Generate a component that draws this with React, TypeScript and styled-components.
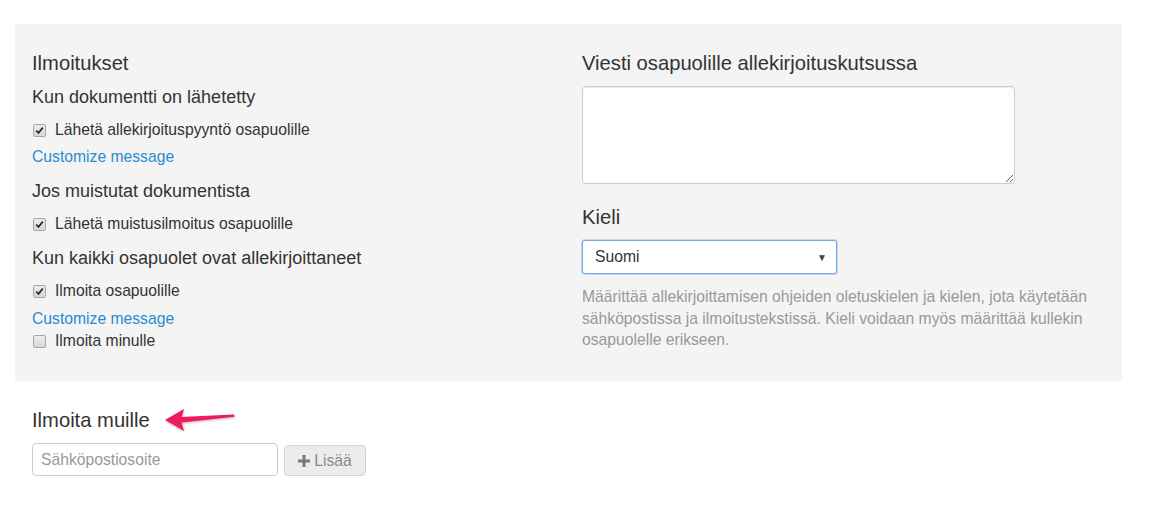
import React from "react";
import styled, { createGlobalStyle } from "styled-components";

const Global = createGlobalStyle`
  html, body { margin: 0; padding: 0; background: #fff; }
  body { font-family: "Liberation Sans", Arial, sans-serif; color: #333; }
  * { box-sizing: border-box; }
`;

const Page = styled.div`
  padding: 24px 0 0 15px;
  width: 1156px;
  height: 506px;
`;

const Panel = styled.section`
  width: 1107px;
  background: #f4f4f4;
  padding: 28px 0 30px 17px;
  display: grid;
  grid-template-columns: 550px 1fr;
`;

const Column = styled.div`
  display: flex;
  flex-direction: column;
  align-items: flex-start;
`;

const Title = styled.h3`
  margin: 0;
  font-size: 20.2px;
  line-height: 22px;
  font-weight: 400;
  color: #333;
`;

const SubTitle = styled.h4<{ $gap?: number }>`
  margin: ${(p) => p.$gap ?? 12}px 0 0;
  font-size: 18px;
  line-height: 22px;
  font-weight: 400;
  color: #333;
`;

const CheckRow = styled.label<{ $gap?: number }>`
  display: flex;
  align-items: center;
  gap: 9px;
  margin-top: ${(p) => p.$gap ?? 12}px;
  padding-left: 1px;
  font-size: 15.7px;
  line-height: 20px;
  color: #333;
`;

const Box = styled.span`
  width: 13px;
  height: 13px;
  border: 1px solid #a6a6a6;
  border-radius: 2px;
  background: linear-gradient(#ececec, #d8d8d8);
  display: flex;
  align-items: center;
  justify-content: center;
`;

const Link = styled.a<{ $gap?: number }>`
  margin-top: ${(p) => p.$gap ?? 7}px;
  font-size: 15.7px;
  line-height: 20px;
  color: #2a8bd0;
  text-decoration: none;
`;

const TextArea = styled.textarea`
  margin-top: 12px;
  width: 433px;
  height: 98px;
  border: 1px solid #ccc;
  border-radius: 4px;
  background: #fff;
  box-shadow: inset 0 1px 1px rgba(0, 0, 0, 0.075);
  font-family: "Liberation Sans", Arial, sans-serif;
  font-size: 15px;
`;

const Spaced = styled(Title)`
  margin-top: 22px;
`;

const Select = styled.div`
  margin-top: 12px;
  width: 255px;
  height: 34px;
  background: #fff;
  border: 1px solid #75a9e6;
  border-radius: 3px;
  box-shadow: 0 0 0 1px rgba(130, 175, 232, 0.45);
  display: flex;
  align-items: center;
  justify-content: space-between;
  padding: 0 9px 0 12px;
  font-size: 15.7px;
  color: #333;
`;

const Caret = styled.span`
  font-size: 10px;
  color: #444;
`;

const Help = styled.p`
  margin: 12px 0 0;
  width: 530px;
  font-size: 15.7px;
  line-height: 21.5px;
  color: #999;
`;

const Below = styled.section`
  padding: 28px 0 0 17px;
`;

const HeadRow = styled.div`
  display: flex;
  align-items: center;
  gap: 14px;
  height: 22px;
`;

const InputRow = styled.div`
  display: flex;
  align-items: flex-start;
  gap: 6px;
  margin-top: 12px;
`;

const Email = styled.input`
  width: 246px;
  height: 33px;
  border: 1px solid #ccc;
  border-radius: 4px;
  padding: 0 8px;
  font-family: "Liberation Sans", Arial, sans-serif;
  font-size: 15.7px;
  color: #333;
  background: #fff;
  &::placeholder { color: #999; }
`;

const AddButton = styled.button`
  margin-top: 2px;
  width: 82px;
  height: 31px;
  border: 1px solid #d4d4d4;
  border-radius: 4px;
  background: #ececec;
  color: #8a8a8a;
  font-family: "Liberation Sans", Arial, sans-serif;
  font-size: 15.7px;
  display: flex;
  align-items: center;
  justify-content: center;
  gap: 4px;
  padding: 0;
`;

const Check = () => (
  <svg width="9" height="9" viewBox="0 0 9 9">
    <path d="M1.2 4.6 L3.5 6.9 L7.8 1.6" fill="none" stroke="#2b2b2b" strokeWidth="1.7" />
  </svg>
);

const CheckItem = ({ checked, label, gap }: { checked: boolean; label: string; gap?: number }) => (
  <CheckRow $gap={gap}>
    <Box>{checked && <Check />}</Box>
    {label}
  </CheckRow>
);

const Arrow = () => (
  <svg width="72" height="28" viewBox="0 0 72 28">
    <defs>
      <filter id="sh" x="-10%" y="-30%" width="120%" height="160%">
        <feDropShadow dx="0.5" dy="1" stdDeviation="0.8" floodColor="#000" floodOpacity="0.3" />
      </filter>
    </defs>
    <path
      d="M1 14 L20 3 L17.5 11 L70 8.5 L70.5 10.8 L17.5 16.5 L20 25 Z"
      fill="#ee1a5c"
      filter="url(#sh)"
    />
  </svg>
);

const Plus = () => (
  <svg width="12" height="12" viewBox="0 0 12 12">
    <path d="M4.5 0 H7.5 V4.5 H12 V7.5 H7.5 V12 H4.5 V7.5 H0 V4.5 H4.5 Z" fill="#777" />
  </svg>
);

export default function App() {
  return (
    <Page>
      <Global />
      <Panel>
        <Column>
          <Title>Ilmoitukset</Title>
          <SubTitle>Kun dokumentti on lähetetty</SubTitle>
          <CheckItem checked label="Lähetä allekirjoituspyyntö osapuolille" />
          <Link href="#">Customize message</Link>
          <SubTitle $gap={13}>Jos muistutat dokumentista</SubTitle>
          <CheckItem checked label="Lähetä muistusilmoitus osapuolille" />
          <SubTitle $gap={13}>Kun kaikki osapuolet ovat allekirjoittaneet</SubTitle>
          <CheckItem checked label="Ilmoita osapuolille" />
          <Link href="#" $gap={8}>Customize message</Link>
          <CheckItem checked={false} label="Ilmoita minulle" gap={2} />
        </Column>
        <Column>
          <Title>Viesti osapuolille allekirjoituskutsussa</Title>
          <TextArea />
          <Spaced>Kieli</Spaced>
          <Select>
            <span>Suomi</span>
            <Caret>▼</Caret>
          </Select>
          <Help>
            Määrittää allekirjoittamisen ohjeiden oletuskielen ja kielen, jota käytetään
            sähköpostissa ja ilmoitustekstissä. Kieli voidaan myös määrittää kullekin
            osapuolelle erikseen.
          </Help>
        </Column>
      </Panel>
      <Below>
        <HeadRow>
          <Title>Ilmoita muille</Title>
          <Arrow />
        </HeadRow>
        <InputRow>
          <Email placeholder="Sähköpostiosoite" />
          <AddButton>
            <Plus />
            Lisää
          </AddButton>
        </InputRow>
      </Below>
    </Page>
  );
}
